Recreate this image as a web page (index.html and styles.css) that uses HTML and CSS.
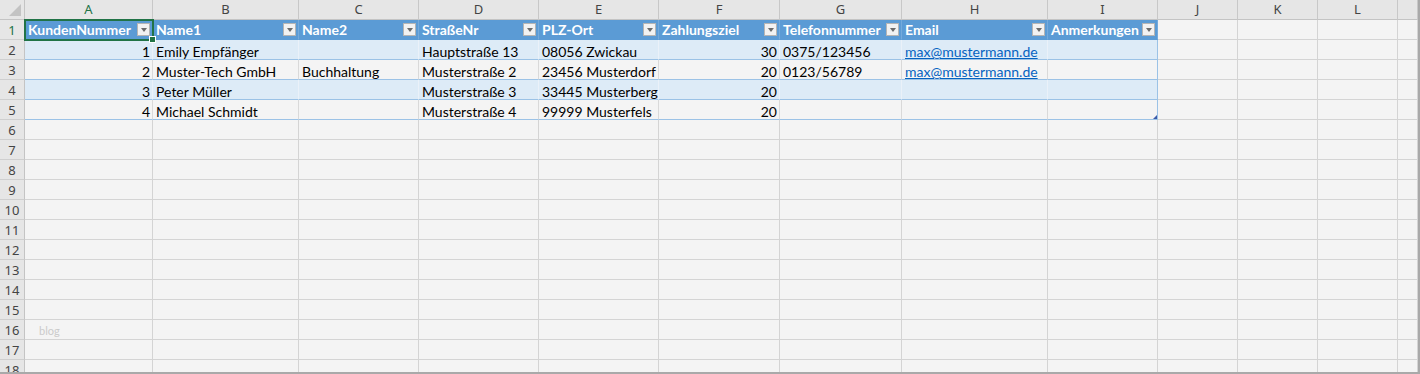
FILE: index.html
```html
<!DOCTYPE html>
<html lang="de">
<head>
    <meta charset="UTF-8">
    <title>Kundenliste</title>
    <link rel="stylesheet" href="styles.css">
</head>
<body>
    <div class="sheet">
        <!-- column headers -->
        <div class="corner"></div>
        <div class="ch sel">A</div><div class="ch">B</div><div class="ch">C</div><div class="ch">D</div><div class="ch">E</div><div class="ch">F</div>
        <div class="ch">G</div><div class="ch">H</div><div class="ch">I</div><div class="ch">J</div><div class="ch">K</div><div class="ch">L</div><div class="ch"></div>

        <!-- table header -->
        <div class="rh sel">1</div>
        <div class="th active"><span>KundenNummer</span><span class="flt"></span></div>
        <div class="th"><span>Name1</span><span class="flt"></span></div>
        <div class="th"><span>Name2</span><span class="flt"></span></div>
        <div class="th"><span>StraßeNr</span><span class="flt"></span></div>
        <div class="th"><span>PLZ-Ort</span><span class="flt"></span></div>
        <div class="th"><span>Zahlungsziel</span><span class="flt"></span></div>
        <div class="th"><span>Telefonnummer</span><span class="flt"></span></div>
        <div class="th"><span>Email</span><span class="flt"></span></div>
        <div class="th"><span>Anmerkungen</span><span class="flt"></span></div>
        <div class="c"></div><div class="c"></div><div class="c"></div><div class="c"></div>

        <!-- table rows -->
        <div class="rh">2</div>
        <div class="t b n">1</div><div class="t b">Emily Empfänger</div><div class="t b"></div><div class="t b">Hauptstraße 13</div><div class="t b">08056 Zwickau</div>
        <div class="t b n">30</div><div class="t b">0375/123456</div><div class="t b"><a href="#">max@mustermann.de</a></div><div class="t b end"></div>
        <div class="c"></div><div class="c"></div><div class="c"></div><div class="c"></div>

        <div class="rh">3</div>
        <div class="t n">2</div><div class="t">Muster-Tech GmbH</div><div class="t">Buchhaltung</div><div class="t">Musterstraße 2</div><div class="t">23456 Musterdorf</div>
        <div class="t n">20</div><div class="t">0123/56789</div><div class="t"><a href="#">max@mustermann.de</a></div><div class="t end"></div>
        <div class="c"></div><div class="c"></div><div class="c"></div><div class="c"></div>

        <div class="rh">4</div>
        <div class="t b n">3</div><div class="t b">Peter Müller</div><div class="t b"></div><div class="t b">Musterstraße 3</div><div class="t b">33445 Musterberg</div>
        <div class="t b n">20</div><div class="t b"></div><div class="t b"></div><div class="t b end"></div>
        <div class="c"></div><div class="c"></div><div class="c"></div><div class="c"></div>

        <div class="rh">5</div>
        <div class="t n">4</div><div class="t">Michael Schmidt</div><div class="t"></div><div class="t">Musterstraße 4</div><div class="t">99999 Musterfels</div>
        <div class="t n">20</div><div class="t"></div><div class="t"></div><div class="t end corner-handle"></div>
        <div class="c"></div><div class="c"></div><div class="c"></div><div class="c"></div>

        <!-- empty rows -->
        <div class="rh">6</div><div class="c"></div><div class="c"></div><div class="c"></div><div class="c"></div><div class="c"></div><div class="c"></div><div class="c"></div><div class="c"></div><div class="c"></div><div class="c"></div><div class="c"></div><div class="c"></div><div class="c"></div>
        <div class="rh">7</div><div class="c"></div><div class="c"></div><div class="c"></div><div class="c"></div><div class="c"></div><div class="c"></div><div class="c"></div><div class="c"></div><div class="c"></div><div class="c"></div><div class="c"></div><div class="c"></div><div class="c"></div>
        <div class="rh">8</div><div class="c"></div><div class="c"></div><div class="c"></div><div class="c"></div><div class="c"></div><div class="c"></div><div class="c"></div><div class="c"></div><div class="c"></div><div class="c"></div><div class="c"></div><div class="c"></div><div class="c"></div>
        <div class="rh">9</div><div class="c"></div><div class="c"></div><div class="c"></div><div class="c"></div><div class="c"></div><div class="c"></div><div class="c"></div><div class="c"></div><div class="c"></div><div class="c"></div><div class="c"></div><div class="c"></div><div class="c"></div>
        <div class="rh">10</div><div class="c"></div><div class="c"></div><div class="c"></div><div class="c"></div><div class="c"></div><div class="c"></div><div class="c"></div><div class="c"></div><div class="c"></div><div class="c"></div><div class="c"></div><div class="c"></div><div class="c"></div>
        <div class="rh">11</div><div class="c"></div><div class="c"></div><div class="c"></div><div class="c"></div><div class="c"></div><div class="c"></div><div class="c"></div><div class="c"></div><div class="c"></div><div class="c"></div><div class="c"></div><div class="c"></div><div class="c"></div>
        <div class="rh">12</div><div class="c"></div><div class="c"></div><div class="c"></div><div class="c"></div><div class="c"></div><div class="c"></div><div class="c"></div><div class="c"></div><div class="c"></div><div class="c"></div><div class="c"></div><div class="c"></div><div class="c"></div>
        <div class="rh">13</div><div class="c"></div><div class="c"></div><div class="c"></div><div class="c"></div><div class="c"></div><div class="c"></div><div class="c"></div><div class="c"></div><div class="c"></div><div class="c"></div><div class="c"></div><div class="c"></div><div class="c"></div>
        <div class="rh">14</div><div class="c"></div><div class="c"></div><div class="c"></div><div class="c"></div><div class="c"></div><div class="c"></div><div class="c"></div><div class="c"></div><div class="c"></div><div class="c"></div><div class="c"></div><div class="c"></div><div class="c"></div>
        <div class="rh">15</div><div class="c"></div><div class="c"></div><div class="c"></div><div class="c"></div><div class="c"></div><div class="c"></div><div class="c"></div><div class="c"></div><div class="c"></div><div class="c"></div><div class="c"></div><div class="c"></div><div class="c"></div>
        <div class="rh">16</div><div class="c"><span class="wm">blog</span></div><div class="c"></div><div class="c"></div><div class="c"></div><div class="c"></div><div class="c"></div><div class="c"></div><div class="c"></div><div class="c"></div><div class="c"></div><div class="c"></div><div class="c"></div><div class="c"></div>
        <div class="rh">17</div><div class="c"></div><div class="c"></div><div class="c"></div><div class="c"></div><div class="c"></div><div class="c"></div><div class="c"></div><div class="c"></div><div class="c"></div><div class="c"></div><div class="c"></div><div class="c"></div><div class="c"></div>
        <div class="rh">18</div><div class="c"></div><div class="c"></div><div class="c"></div><div class="c"></div><div class="c"></div><div class="c"></div><div class="c"></div><div class="c"></div><div class="c"></div><div class="c"></div><div class="c"></div><div class="c"></div><div class="c"></div>
    </div>
</body>
</html>
```

FILE: styles.css
```css
/* Sheet grid */
body {
    margin: 0;
    background-color: #fff;
    font-family: Lato, "Open Sans", sans-serif;
}

.sheet {
    width: 1418px;
    height: 372px;
    overflow: hidden;
    display: grid;
    grid-template-columns: 25px 128px 146px 120px 120px 120px 121px 122px 146px 110px 80px 80px 80px 20px;
    grid-auto-rows: 20px;
    background-color: #f4f4f4;
    border-right: 2px solid #a9a9a9;
    border-bottom: 2px solid #a9a9a9;
}

.sheet > div {
    box-sizing: border-box;
    border-right: 1px solid #d4d4d4;
    border-bottom: 1px solid #d4d4d4;
    white-space: nowrap;
    font-size: 14px;
    line-height: 19px;
    color: #000;
}

/* Headers */
.corner {
    position: relative;
    background-color: #e6e6e6;
    border-right-color: #c4c4c4 !important;
    border-bottom-color: #c4c4c4 !important;
}

.corner::after {
    content: "";
    position: absolute;
    right: 3px;
    bottom: 3px;
    border-left: 12px solid transparent;
    border-bottom: 12px solid #c3c3c3;
}

.sheet > .ch {
    background-color: #e6e6e6;
    border-right-color: #c8c8c8;
    border-bottom-color: #c4c4c4;
    font-family: "Noto Sans", sans-serif;
    font-size: 13px;
    color: #444;
    text-align: center;
}

.sheet > .rh {
    background-color: #e6e6e6;
    border-right-color: #c4c4c4;
    border-bottom-color: #cfcfcf;
    font-family: "Noto Sans", sans-serif;
    font-size: 13px;
    line-height: 21px;
    color: #444;
    text-align: center;
}

.sheet > .sel {
    color: #217346;
}

/* Table */
.sheet > .th {
    display: flex;
    justify-content: space-between;
    align-items: center;
    background-color: #5b9bd5;
    border-right-color: #74aadc;
    border-bottom-color: #5b9bd5;
    color: #fff;
    font-weight: bold;
    padding-left: 3px;
    padding-right: 2px;
}

.flt {
    position: relative;
    width: 13px;
    height: 13px;
    box-sizing: border-box;
    border: 1px solid #b5b5b5;
    background-color: #f2f2f2;
    flex-shrink: 0;
}

.flt::after {
    content: "";
    position: absolute;
    left: 3px;
    top: 4px;
    border-left: 3px solid transparent;
    border-right: 3px solid transparent;
    border-top: 4px solid #6b6b6b;
}

.sheet > .t {
    padding-left: 3px;
    padding-top: 2px;
    border-right-color: #d9d9d9;
    border-bottom-color: #9bc2e6;
}

.sheet > .b {
    background-color: #ddebf7;
    border-right-color: #eaf1f9;
}

.sheet > .n {
    text-align: right;
    padding-right: 2px;
}

.sheet > .end {
    border-right-color: #9bc2e6;
}

.sheet a {
    color: #0563c1;
}

/* Selection and resize handle */
.active {
    position: relative;
}

.active::before {
    content: "";
    position: absolute;
    left: -1px;
    top: -1px;
    right: -2px;
    bottom: -2px;
    border: 2px solid #217346;
}

.active::after {
    content: "";
    position: absolute;
    right: -4px;
    bottom: -4px;
    width: 5px;
    height: 5px;
    background-color: #217346;
    border: 1px solid #fff;
}

.corner-handle {
    position: relative;
}

.corner-handle::after {
    content: "";
    position: absolute;
    right: 0;
    bottom: 0;
    border-left: 4px solid transparent;
    border-bottom: 4px solid #3c5aa8;
}

.wm {
    margin-left: 14px;
    font-size: 11px;
    color: #cbcbcb;
}
```
